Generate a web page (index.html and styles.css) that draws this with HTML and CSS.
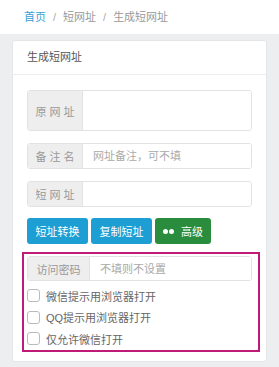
FILE: index.html
```html
<!DOCTYPE html>
<html>
<head>
    <meta charset="utf-8">
    <title>生成短网址</title>
    <link rel="stylesheet" href="styles.css">
</head>
<body>
    <div class="crumbs">
        <a href="#">首页</a><span class="sep">/</span>短网址<span class="sep">/</span>生成短网址
    </div>

    <div class="main">
        <div class="card">
            <div class="card-head">生成短网址</div>
            <div class="card-body">
                <div class="group tall">
                    <span class="addon spaced">原网址</span>
                    <textarea class="field"></textarea>
                </div>
                <div class="group">
                    <span class="addon spaced">备注名</span>
                    <input class="field" type="text" placeholder="网址备注，可不填">
                </div>
                <div class="group">
                    <span class="addon spaced">短网址</span>
                    <input class="field" type="text">
                </div>

                <div class="buttons">
                    <button class="btn blue">短址转换</button>
                    <button class="btn blue">复制短址</button>
                    <button class="btn green"><span class="dots"><i></i><i></i></span>高级</button>
                </div>

                <!-- advanced options -->
                <div class="advanced">
                    <div class="group">
                        <span class="addon wide">访问密码</span>
                        <input class="field" type="text" placeholder="不填则不设置">
                    </div>
                    <label class="check"><input type="checkbox"><span class="box"></span>微信提示用浏览器打开</label>
                    <label class="check"><input type="checkbox"><span class="box"></span>QQ提示用浏览器打开</label>
                    <label class="check"><input type="checkbox"><span class="box"></span>仅允许微信打开</label>
                </div>
            </div>
        </div>
    </div>
</body>
</html>
```

FILE: styles.css
```css
/* Base */
body {
    font-family: "Liberation Sans", "Noto Sans CJK SC", sans-serif;
    font-size: 11px;
    margin: 0;
    padding: 0;
    background-color: #eceef0;
    color: #555;
}

/* Breadcrumb bar */
.crumbs {
    height: 34px;
    line-height: 34px;
    padding-left: 24px;
    background-color: #fff;
    color: #999;
}

.crumbs a {
    color: #3a9fd6;
    text-decoration: none;
}

.crumbs .sep {
    margin: 0 7px;
    color: #aaa;
}

/* Card */
.main {
    padding: 6px 12px;
}

.card {
    background-color: #fff;
    border: 1px solid #e4e6e8;
    border-radius: 3px;
    height: 322px;
    box-sizing: border-box;
}

.card-head {
    height: 33px;
    line-height: 33px;
    padding-left: 14px;
    border-bottom: 1px solid #ececec;
    color: #555;
}

.card-body {
    padding: 15px 14px 0 14px;
}

/* Input groups */
.group {
    display: flex;
    height: 26px;
    box-sizing: border-box;
    border: 1px solid #e2e2e2;
    border-radius: 3px;
    margin-bottom: 12px;
    overflow: hidden;
}

.group.tall {
    height: 41px;
}

.addon {
    display: flex;
    align-items: center;
    justify-content: center;
    width: 55px;
    background-color: #eeeeee;
    border-right: 1px solid #e2e2e2;
    color: #999;
    flex-shrink: 0;
}

.addon.spaced {
    letter-spacing: 3px;
    padding-left: 3px;
    box-sizing: border-box;
}

.addon.wide {
    width: 61px;
}

.field {
    flex: 1;
    min-width: 0;
    border: 0;
    outline: none;
    resize: none;
    padding: 0 10px;
    font-family: inherit;
    font-size: 11px;
    color: #555;
}

.field::placeholder {
    color: #aaa;
}

/* Buttons */
.buttons {
    display: flex;
    gap: 3px;
    margin-top: -1px;
}

.btn {
    height: 26px;
    padding: 0 6px;
    border: 0;
    border-radius: 3px;
    color: #fff;
    font-family: inherit;
    font-size: 11px;
    display: flex;
    align-items: center;
}

.btn.blue {
    background-color: #1e9fd4;
    width: 61px;
    justify-content: center;
}

.btn.green {
    background-color: #2a8d3e;
    width: 56px;
    justify-content: center;
}

.dots {
    display: flex;
    gap: 1px;
    margin-right: 7px;
}

.dots i {
    width: 5px;
    height: 5px;
    border-radius: 50%;
    background-color: #fff;
}

/* Advanced box */
.advanced {
    margin: 8px -8px 0 -5px;
    border: 2px solid #c01a78;
    padding: 2px 6px 0 3px;
    height: 94px;
}

.advanced .group {
    height: 25px;
    margin-bottom: 4px;
}

.check {
    display: flex;
    align-items: center;
    height: 21.5px;
    color: #666;
}

.check input {
    display: none;
}

.check .box {
    width: 11px;
    height: 11px;
    border: 1px solid #bbb;
    border-radius: 3px;
    margin-right: 6px;
}
```
